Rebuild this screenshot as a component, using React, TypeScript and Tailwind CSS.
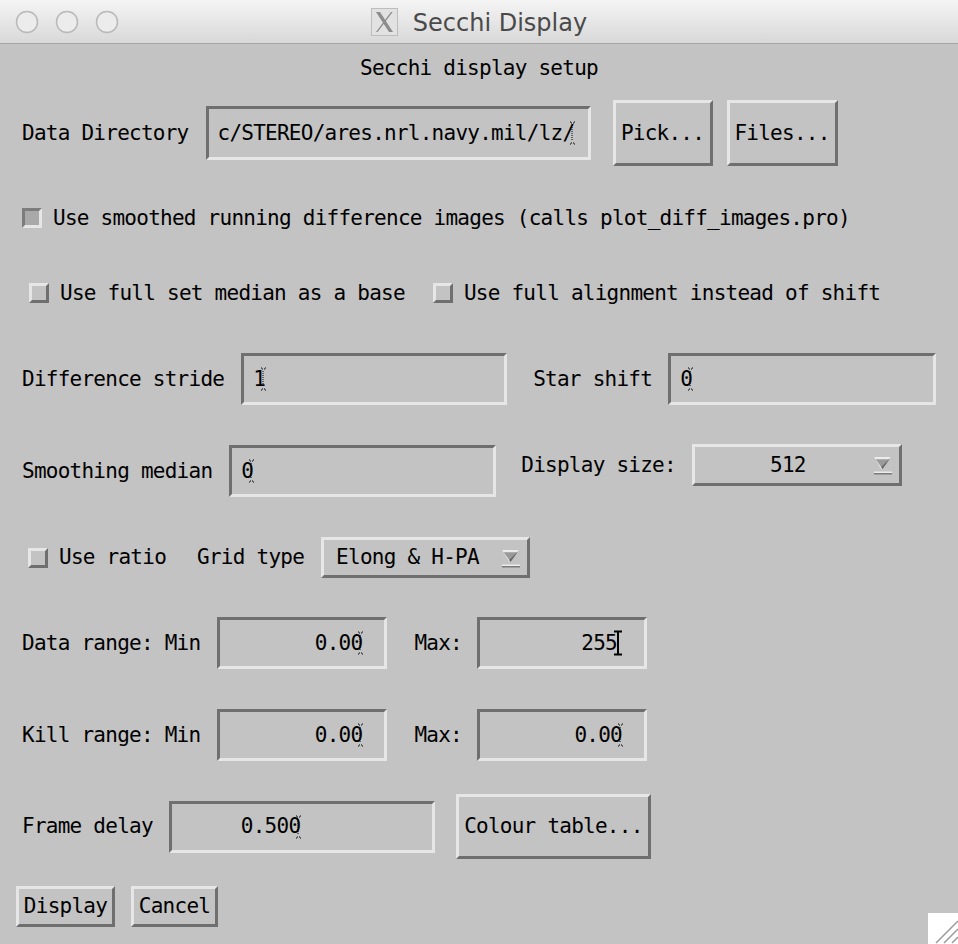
import React from "react";

const sunken =
  "border-[3px] border-t-[#6f6f6f] border-l-[#6f6f6f] border-b-[#e6e6e6] border-r-[#e6e6e6]";
const raised =
  "border-[3px] border-t-[#e6e6e6] border-l-[#e6e6e6] border-b-[#6f6f6f] border-r-[#6f6f6f]";

function TextCursor() {
  return (
    <svg width="7" height="24" viewBox="0 0 7 24" className="shrink-0 -ml-[5px]">
      <path d="M1 1h1M5 1h1M2 2h1M4 2h1M3 4v16M2 22h1M4 22h1M1 23h1M5 23h1" stroke="#000" strokeWidth="1" strokeDasharray="1 1" fill="none" />
    </svg>
  );
}

function IBeam() {
  return (
    <svg width="10" height="26" viewBox="0 0 10 26" className="shrink-0 -ml-[4px]">
      <path d="M1 1.5h8M5 1.5v23M1 24.5h8" stroke="#000" strokeWidth="2" fill="none" />
    </svg>
  );
}

function Check({ on }: { on?: boolean }) {
  return (
    <div
      className={
        "w-[20px] h-[20px] shrink-0 border-[3px] " +
        (on
          ? "bg-[#a9a9a9] border-t-[#7d7d7d] border-l-[#7d7d7d] border-b-[#e6e6e6] border-r-[#e6e6e6]"
          : "bg-[#c3c3c3] border-t-[#e6e6e6] border-l-[#e6e6e6] border-b-[#6f6f6f] border-r-[#6f6f6f]")
      }
    />
  );
}

function DropArrow() {
  return (
    <svg width="20" height="20" viewBox="0 0 20 20" className="shrink-0">
      <path d="M1 2h17l-8.5 12z" fill="#9a9a9a" />
      <path d="M1 2h17l-1.5 2.2H2.6L9.5 14 8.3 14z" fill="#ececec" />
      <path d="M18 2l-8.5 12-1.4-2L16.4 4z" fill="#6a6a6a" />
      <rect x="1" y="16.5" width="18" height="1.5" fill="#ececec" />
      <rect x="1" y="18" width="18" height="1.5" fill="#7a7a7a" />
    </svg>
  );
}

function Field({ w, h = 52, children, right }: { w: number; h?: number; children?: React.ReactNode; right?: string }) {
  return (
    <div
      style={{ width: w, height: h }}
      className={sunken + " shrink-0 flex items-center overflow-hidden whitespace-nowrap " + (right ?? "pl-[9px]")}
    >
      {children}
    </div>
  );
}

function Btn({ w, h, label }: { w: number; h: number; label: string }) {
  return (
    <button style={{ width: w, height: h }} className={raised + " shrink-0 flex items-center justify-center bg-[#c3c3c3]"}>
      {label}
    </button>
  );
}

function Light({ cx }: { cx: number }) {
  return <circle cx={cx} cy="22" r="10.5" fill="#ececec" stroke="#b9b9b9" strokeWidth="1.5" />;
}

export default function App() {
  return (
    <div className="w-[958px] h-[944px] overflow-hidden relative bg-[#c3c3c3] text-black">
      {/* title bar */}
      <div className="h-[44px] relative bg-gradient-to-b from-[#f5f5f5] to-[#d8d8d8] border-b border-[#a6a6a6] flex items-center justify-center">
        <svg width="130" height="44" className="absolute left-0 top-0">
          <Light cx={27} />
          <Light cx={67} />
          <Light cx={107} />
        </svg>
        <div className="flex items-center gap-[14px] mt-[1px]">
          <svg width="27" height="28" viewBox="0 0 27 28" className="mr-[1px]">
            <rect x="0.5" y="0.5" width="26" height="27" fill="#e2e2e2" stroke="#bdbdbd" />
            <path d="M5 4h4l13 20h-4z" fill="#8c8c8c" />
            <path d="M20 4h1.6L6.6 24H5z" fill="#8c8c8c" />
          </svg>
          <span className="font-['DejaVu_Sans',sans-serif] text-[24px] text-[#4a4a4a] mt-[2px]">Secchi Display</span>
        </div>
      </div>

      <div className="font-['DejaVu_Sans_Mono',monospace] text-[21px] tracking-[-0.75px] leading-none whitespace-pre">
        <div className="h-[48px] flex items-center justify-center">Secchi display setup</div>

        {/* data directory */}
        <div className="mt-[8px] h-[66px] flex items-center pl-[22px]">
          <span>Data Directory</span>
          <div className="ml-[17px]">
            <Field w={385} h={54}>
              <span>c/STEREO/ares.nrl.navy.mil/lz/</span>
              <TextCursor />
            </Field>
          </div>
          <div className="ml-[22px]">
            <Btn w={100} h={66} label="Pick..." />
          </div>
          <div className="ml-[14px]">
            <Btn w={111} h={66} label="Files..." />
          </div>
        </div>

        <div className="mt-[42px] h-[20px] flex items-center pl-[22px] gap-[11px]">
          <Check on />
          <span>Use smoothed running difference images (calls plot_diff_images.pro)</span>
        </div>

        <div className="mt-[55px] h-[20px] flex items-center pl-[29px]">
          <Check />
          <span className="ml-[11px]">Use full set median as a base</span>
          <div className="ml-[28px]">
            <Check />
          </div>
          <span className="ml-[11px]">Use full alignment instead of shift</span>
        </div>

        <div className="mt-[50px] h-[52px] flex items-center pl-[22px]">
          <span>Difference stride</span>
          <div className="ml-[17px]">
            <Field w={266}>
              <span>1</span>
              <TextCursor />
            </Field>
          </div>
          <span className="ml-[26px]">Star shift</span>
          <div className="ml-[16px]">
            <Field w={268}>
              <span>0</span>
              <TextCursor />
            </Field>
          </div>
        </div>

        <div className="mt-[39px] flex items-start pl-[22px]">
          <div className="mt-[1px] h-[52px] flex items-center">
            <span>Smoothing median</span>
            <div className="ml-[17px]">
              <Field w={267}>
                <span>0</span>
                <TextCursor />
              </Field>
            </div>
          </div>
          <div className="h-[42px] flex items-center ml-[25px]">
            <span>Display size:</span>
            <div className={raised + " ml-[16px] w-[210px] h-[42px] flex items-center pr-[6px]"}>
              <span className="flex-1 text-center pl-[8px]">512</span>
              <DropArrow />
            </div>
          </div>
        </div>

        <div className="mt-[40px] h-[41px] flex items-center pl-[28px]">
          <Check />
          <span className="ml-[11px]">Use ratio</span>
          <span className="ml-[31px]">Grid type</span>
          <div className={raised + " ml-[17px] w-[209px] h-[41px] flex items-center pl-[12px] pr-[6px]"}>
            <span className="flex-1">Elong &amp; H-PA</span>
            <DropArrow />
          </div>
        </div>

        {[
          { label: "Data range: Min", ibeam: true, mt: "mt-[39px]" },
          { label: "Kill range: Min", ibeam: false, mt: "mt-[40px]" },
        ].map((r) => (
          <div key={r.label} className={r.mt + " h-[52px] flex items-center pl-[22px]"}>
            <span>{r.label}</span>
            <div className="ml-[17px]">
              <Field w={170} right="justify-end pr-[20px]">
                <span>0.00</span>
                <TextCursor />
              </Field>
            </div>
            <span className="ml-[27px]">Max:</span>
            <div className="ml-[15px]">
              {r.ibeam ? (
                <Field w={170} right="justify-end pr-[21px]">
                  <span>255</span>
                  <IBeam />
                </Field>
              ) : (
                <Field w={170} right="justify-end pr-[20px]">
                  <span>0.00</span>
                  <TextCursor />
                </Field>
              )}
            </div>
          </div>
        ))}

        <div className="mt-[33px] h-[65px] flex items-center pl-[22px]">
          <span>Frame delay</span>
          <div className="ml-[16px]">
            <Field w={266} right="pl-[69px]">
              <span>0.500</span>
              <TextCursor />
            </Field>
          </div>
          <div className="ml-[21px]">
            <Btn w={195} h={65} label="Colour table..." />
          </div>
        </div>

        <div className="mt-[27px] h-[41px] flex items-center pl-[16px] gap-[16px]">
          <Btn w={99} h={41} label="Display" />
          <Btn w={87} h={41} label="Cancel" />
        </div>
      </div>

      {/* resize grip */}
      <div className="absolute right-0 bottom-0 w-[30px] h-[31px] bg-white">
        <svg width="30" height="31" viewBox="0 0 30 31">
          <path d="M8 30L30 8M16 30L30 16M24 30L30 24" stroke="#9a9a9a" strokeWidth="1.5" />
        </svg>
      </div>
    </div>
  );
}
